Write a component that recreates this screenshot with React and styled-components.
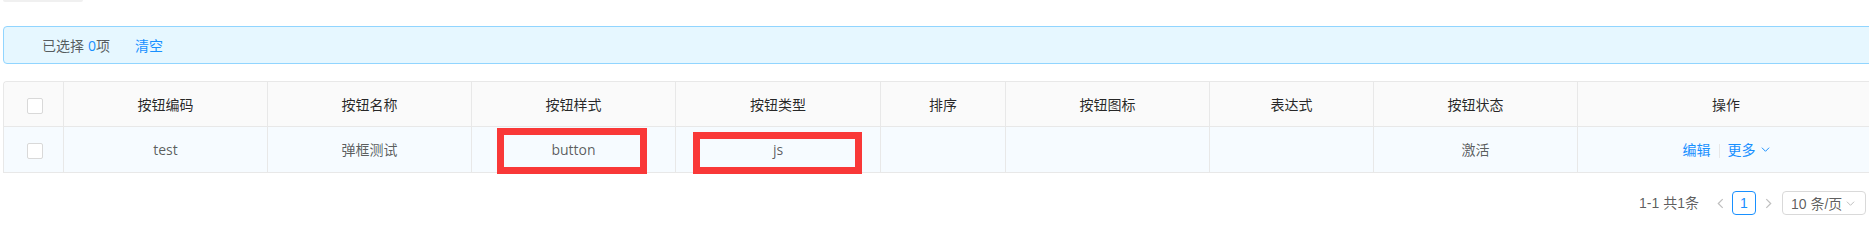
import React from "react";
import styled, { createGlobalStyle } from "styled-components";

const GlobalStyle = createGlobalStyle`
  html, body {
    margin: 0;
    padding: 0;
    background: #fff;
    overflow: hidden;
  }
  body {
    font-family: "Open Sans", "Noto Sans CJK SC", sans-serif;
    font-size: 14px;
    color: rgba(0, 0, 0, 0.65);
  }
`;

const columns = [
  { key: "code", title: "按钮编码", width: 204 },
  { key: "name", title: "按钮名称", width: 204 },
  { key: "style", title: "按钮样式", width: 204, mark: { left: 25, top: 1, width: 150, height: 46 } },
  { key: "type", title: "按钮类型", width: 205, mark: { left: 17, top: 5, width: 169, height: 42 } },
  { key: "sort", title: "排序", width: 125 },
  { key: "icon", title: "按钮图标", width: 204 },
  { key: "expr", title: "表达式", width: 164 },
  { key: "status", title: "按钮状态", width: 204 },
];

const rows = [
  { id: 1, code: "test", name: "弹框测试", style: "button", type: "js", sort: "", icon: "", expr: "", status: "激活" },
];

const Page = styled.div`
  width: 1872px;
  margin-left: 3px;
`;

const TopStub = styled.div`
  width: 80px;
  height: 2px;
  background: #f0f0f0;
  border-radius: 0 0 3px 3px;
`;

const SelectionAlert = styled.div`
  margin-top: 24px;
  height: 38px;
  box-sizing: border-box;
  display: flex;
  align-items: center;
  padding: 0 15px 0 38px;
  background: #e6f7ff;
  border: 1px solid #91d5ff;
  border-radius: 4px;
  line-height: 1.5;
`;

const Count = styled.span`
  color: #1890ff;
  margin-left: 4px;
`;

const ClearLink = styled.a`
  color: #1890ff;
  margin-left: 25px;
  cursor: pointer;
`;

const Table = styled.table`
  margin-top: 17px;
  width: 1872px;
  table-layout: fixed;
  border-collapse: separate;
  border-spacing: 0;
  border-top: 1px solid #e8e8e8;
  border-left: 1px solid #e8e8e8;
  border-radius: 4px 0 0 0;
  line-height: 21px;
`;

const HeadCell = styled.th`
  height: 45px;
  box-sizing: border-box;
  padding: 0 8px;
  background: #fafafa;
  color: rgba(0, 0, 0, 0.85);
  font-weight: 400;
  text-align: center;
  border-right: 1px solid #e8e8e8;
  border-bottom: 1px solid #e8e8e8;
  &:first-child {
    border-top-left-radius: 4px;
  }
`;

const BodyCell = styled.td`
  position: relative;
  height: 46px;
  box-sizing: border-box;
  padding: 0 8px;
  background: #f6fbff;
  text-align: center;
  border-right: 1px solid #e8e8e8;
  border-bottom: 1px solid #e8e8e8;
`;

const Checkbox = styled.span`
  display: inline-block;
  vertical-align: middle;
  width: 16px;
  height: 16px;
  box-sizing: border-box;
  background: #fff;
  border: 1px solid #d9d9d9;
  border-radius: 2px;
  margin-left: 2px;
`;

const RedMark = styled.span`
  position: absolute;
  left: ${(p) => p.$left}px;
  top: ${(p) => p.$top}px;
  width: ${(p) => p.$width}px;
  height: ${(p) => p.$height}px;
  box-sizing: border-box;
  border: 7px solid #f93838;
  pointer-events: none;
`;

const ActionLink = styled.a`
  color: #1890ff;
  cursor: pointer;
  display: inline-flex;
  align-items: center;
`;

const ActionDivider = styled.span`
  display: inline-block;
  width: 1px;
  height: 14px;
  margin: 0 8px;
  background: #e8e8e8;
  vertical-align: middle;
`;

const Pager = styled.div`
  display: flex;
  justify-content: flex-end;
  align-items: center;
  margin-top: 18px;
  padding-right: 9px;
  font-family: "Liberation Sans", "Noto Sans CJK SC", sans-serif;
`;

const PagerTotal = styled.span`
  margin-right: 9px;
  line-height: 24px;
`;

const PagerArrow = styled.span`
  width: 24px;
  height: 24px;
  display: flex;
  align-items: center;
  justify-content: center;
  color: #bfbfbf;
`;

const PagerItem = styled.span`
  width: 24px;
  height: 24px;
  box-sizing: border-box;
  display: flex;
  align-items: center;
  justify-content: center;
  border: 1px solid #1890ff;
  border-radius: 4px;
  color: #1890ff;
  font-size: 14px;
`;

const SizeSelect = styled.span`
  margin-left: 2px;
  width: 84px;
  height: 24px;
  box-sizing: border-box;
  display: flex;
  align-items: center;
  justify-content: space-between;
  padding: 0 10px 0 8px;
  border: 1px solid #d9d9d9;
  border-radius: 4px;
`;

const Chevron = ({ dir = "down", color = "currentColor", size = 8 }) => {
  const paths = {
    down: "M1 3 L5 7 L9 3",
    left: "M7 1 L3 5 L7 9",
    right: "M3 1 L7 5 L3 9",
  };
  return (
    <svg width={size} height={size} viewBox="0 0 10 10" fill="none">
      <path d={paths[dir]} stroke={color} strokeWidth="1.1" />
    </svg>
  );
};

export default function App() {
  return (
    <>
      <GlobalStyle />
      <Page>
        <TopStub />
        <SelectionAlert>
          <span>
            已选择<Count>0</Count>项
          </span>
          <ClearLink>清空</ClearLink>
        </SelectionAlert>

        <Table>
          <colgroup>
            <col style={{ width: 60 }} />
            {columns.map((c) => (
              <col key={c.key} style={{ width: c.width }} />
            ))}
            <col />
          </colgroup>
          <thead>
            <tr>
              <HeadCell>
                <Checkbox />
              </HeadCell>
              {columns.map((c) => (
                <HeadCell key={c.key}>{c.title}</HeadCell>
              ))}
              <HeadCell>操作</HeadCell>
            </tr>
          </thead>
          <tbody>
            {rows.map((r) => (
              <tr key={r.id}>
                <BodyCell>
                  <Checkbox />
                </BodyCell>
                {columns.map((c) => (
                  <BodyCell key={c.key}>
                    {r[c.key]}
                    {c.mark && (
                      <RedMark $left={c.mark.left} $top={c.mark.top} $width={c.mark.width} $height={c.mark.height} />
                    )}
                  </BodyCell>
                ))}
                <BodyCell>
                  <ActionLink>编辑</ActionLink>
                  <ActionDivider />
                  <ActionLink>
                    更多
                    <span style={{ marginLeft: 5, display: "inline-flex" }}>
                      <Chevron dir="down" size={9} />
                    </span>
                  </ActionLink>
                </BodyCell>
              </tr>
            ))}
          </tbody>
        </Table>

        <Pager>
          <PagerTotal>1-1 共1条</PagerTotal>
          <PagerArrow>
            <Chevron dir="left" size={11} />
          </PagerArrow>
          <PagerItem>1</PagerItem>
          <PagerArrow>
            <Chevron dir="right" size={11} />
          </PagerArrow>
          <SizeSelect>
            <span>10 条/页</span>
            <Chevron dir="down" color="#bfbfbf" size={9} />
          </SizeSelect>
        </Pager>
      </Page>
    </>
  );
}
